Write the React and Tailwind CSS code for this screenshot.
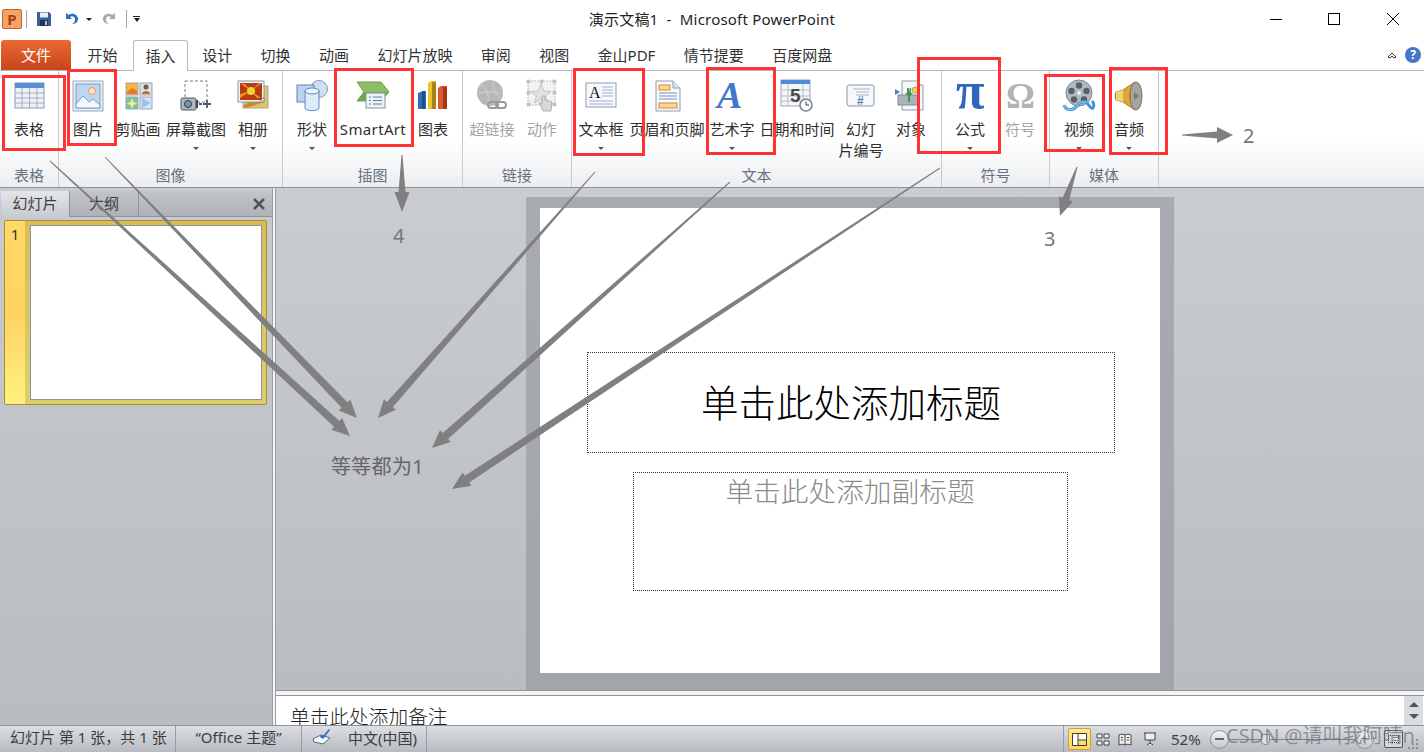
import React from "react";

// tapered annotation arrow: thin tail, thick neck, flat head
function arrowPoints(x1, y1, x2, y2, tail, neck, head, headLen) {
  const len = Math.hypot(x2 - x1, y2 - y1);
  const ux = (x2 - x1) / len;
  const uy = (y2 - y1) / len;
  const nx = -uy;
  const ny = ux;
  const bx = x2 - ux * headLen;
  const by = y2 - uy * headLen;
  const pts = [
    [x1 + (nx * tail) / 2, y1 + (ny * tail) / 2],
    [bx + (nx * neck) / 2, by + (ny * neck) / 2],
    [bx + (nx * head) / 2, by + (ny * head) / 2],
    [x2, y2],
    [bx - (nx * head) / 2, by - (ny * head) / 2],
    [bx - (nx * neck) / 2, by - (ny * neck) / 2],
    [x1 - (nx * tail) / 2, y1 - (ny * tail) / 2],
  ];
  return pts.map((p) => p[0].toFixed(1) + "," + p[1].toFixed(1)).join(" ");
}

const arrows = [
  [50, 161, 350, 436, 1, 8, 16, 18],
  [105, 157, 357, 418, 1, 8, 16, 18],
  [595, 172, 378, 418, 1, 8, 16, 18],
  [730, 182, 432, 448, 1, 8, 16, 18],
  [940, 168, 452, 489, 1, 8, 16, 18],
  [402, 155, 402, 212, 1, 7, 15, 20],
  [1182, 135, 1233, 135, 1, 7, 16, 16],
  [1077, 167, 1060, 216, 1, 7, 15, 18],
];

function Icon({ children }) {
  return (
    <svg width="36" height="36" viewBox="0 0 36 36" className="block overflow-visible">
      {children}
    </svg>
  );
}

const TableIcon = () => (
  <Icon>
    <rect x="4" y="5" width="29" height="25" fill="#eef1f7" stroke="#8c99ad" />
    <rect x="4" y="5" width="29" height="5" fill="#5b8fd6" />
    <path d="M4 15h29M4 20h29M4 25h29M11 10v20M18.500 10v20M26 10v20" stroke="#a3aec0" strokeWidth="1" fill="none" />
  </Icon>
);

const PictureIcon = () => (
  <Icon>
    <rect x="3" y="3" width="30" height="30" fill="#e9eef5" stroke="#9aa7b8" />
    <rect x="6" y="6" width="24" height="24" fill="#bcd7f3" stroke="#7d9cc6" />
    <circle cx="22" cy="13" r="3.500" fill="#fbe3c4" stroke="#f09a58" />
    <path d="M6 26l7-8 6 6 4-3 7 6v3H6z" fill="#f4f8fd" stroke="#7ca2d2" />
  </Icon>
);

const ClipArtIcon = () => (
  <Icon>
    <rect x="6" y="5" width="12" height="12" fill="#f5b63c" stroke="#98a5b5" />
    <path d="M7 14l5-4 5 3v3H7z" fill="#e8762c" />
    <rect x="20" y="5" width="12" height="12" fill="#dfe3e8" stroke="#98a5b5" />
    <circle cx="26" cy="9" r="2.500" fill="#6d5a50" />
    <path d="M22 16c0-4 8-4 8 0z" fill="#c9682c" />
    <rect x="6" y="19" width="12" height="12" fill="#7dc5a0" stroke="#98a5b5" />
    <path d="M12 20l1.500 4 4 1.500-4 1.500-1.500 4-1.500-4-4-1.500 4-1.500z" fill="#f2ee8a" />
    <rect x="20" y="19" width="12" height="12" fill="#d7e6f7" stroke="#98a5b5" />
    <path d="M22 20l9 5-9 5z" fill="#9dc1ea" />
  </Icon>
);

const ScreenshotIcon = () => (
  <Icon>
    <rect x="7" y="3" width="22" height="21" fill="none" stroke="#6f7a88" strokeDasharray="3 2" />
    <rect x="3" y="20" width="15" height="12" rx="1.500" fill="#aeb6c0" stroke="#4f5965" />
    <circle cx="10" cy="26" r="3.500" fill="#7c93ad" stroke="#333c48" />
    <rect x="18" y="22" width="2" height="8" fill="#39424d" />
    <path d="M21 26h3M29 22v8M25 26h8" stroke="#4f5965" strokeWidth="1.800" />
  </Icon>
);

const AlbumIcon = () => (
  <Icon>
    <rect x="8" y="8" width="25" height="22" fill="#e9c15c" stroke="#98a5b5" />
    <path d="M10 30l-2-2 6-4 16 0z" fill="#c98a22" />
    <rect x="3" y="3" width="26" height="21" fill="#f4f5f7" stroke="#8a96a6" />
    <rect x="5" y="5" width="22" height="17" fill="#b63d12" />
    <path d="M16 13L6 6h4zM16 13l8-8h3zM16 13L5 20v-4zM16 13l10 7h-4z" fill="#e9902b" />
    <circle cx="16" cy="13" r="4" fill="#e8d72a" />
    <path d="M24 24l5-5v5z" fill="#d9dee4" stroke="#8a96a6" />
  </Icon>
);

const ShapesIcon = () => (
  <Icon>
    <circle cx="25" cy="11" r="8.500" fill="#cfe0f4" stroke="#7c9cc4" />
    <rect x="3" y="7" width="17" height="17" fill="#bcd3ef" stroke="#5f86b8" />
    <path d="M11 13v17c0 3.500 14 3.500 14 0V13z" fill="#dcebfa" stroke="#5f86b8" />
    <ellipse cx="18" cy="13" rx="7" ry="3" fill="#f0f7fe" stroke="#5f86b8" />
  </Icon>
);

const SmartArtIcon = () => (
  <Icon>
    <path d="M2 4h24l8 10-8 9H2l7-9z" fill="#8cbf63" stroke="#6b9c47" />
    <path d="M9 14h25l-8 9H2z" fill="#6fa846" />
    <rect x="11" y="15" width="19" height="15" fill="#eef2f7" stroke="#8896a8" />
    <path d="M14 19h2M18 19h9M14 22.500h2M18 22.500h9M14 26h2M18 26h9" stroke="#5d7fa8" />
  </Icon>
);

const ChartIcon = () => (
  <Icon>
    <path d="M3 15l5-2h3v18H3z" fill="#2f6fb5" />
    <rect x="7" y="13" width="3" height="18" fill="#1f4f8a" />
    <path d="M13 5l3-2h5l-1 28h-7z" fill="#ecc52f" />
    <rect x="17" y="4" width="4" height="27" fill="#a9831a" />
    <path d="M23 10l3-2h6l-1 23h-8z" fill="#e2562a" />
    <rect x="28" y="9" width="4" height="22" fill="#a33a16" />
  </Icon>
);

const LinkIcon = () => (
  <Icon>
    <circle cx="16" cy="15" r="13" fill="#b8b8b8" />
    <path d="M7 7c6 3 8 8 7 19M4 16c8-3 16-3 24 0M20 3c-2 6 0 12 6 17" stroke="#d0d0d0" fill="none" />
    <rect x="14" y="24" width="10" height="6" rx="3" fill="none" stroke="#9a9a9a" strokeWidth="2" />
    <rect x="22" y="24" width="10" height="6" rx="3" fill="none" stroke="#9a9a9a" strokeWidth="2" />
  </Icon>
);

const ActionIcon = () => (
  <Icon>
    <rect x="4" y="3" width="27" height="24" fill="#f3f1f1" stroke="#bdbdbd" strokeDasharray="2 1" />
    <path d="M17 6l3 7 7 .500-5.500 4.500 2 7-6.500-4-6.500 4 2-7L7 13.500l7-.500z" fill="#e4e0e0" stroke="#c5c2c2" />
    <path d="M18 18v8l-3-2 4 9h8l1-9-7-2v-4z" fill="#dbd7d6" stroke="#b3b0b0" />
    <path d="M3 2h3v3H3zM16 2h3v3h-3zM29 2h3v3h-3zM3 13h3v3H3zM29 13h3v3h-3zM3 25h3v3H3zM29 25h3v3h-3z" fill="#c9c9c9" stroke="#a8a8a8" strokeWidth=".5" />
  </Icon>
);

const TextBoxIcon = () => (
  <Icon>
    <rect x="3" y="5" width="30" height="24" fill="#f7f9fc" stroke="#8e9bae" />
    <text x="6" y="20" fontSize="16" fontFamily="'Liberation Serif', serif" fill="#111">A</text>
    <path d="M19 9h11M19 12h11M19 15h11M19 18h11M6 23h24M6 26h24" stroke="#9cb1d1" />
  </Icon>
);

const HeaderIcon = () => (
  <Icon>
    <path d="M7 3h17l7 7v23H7z" fill="#f7f9fc" stroke="#8e9bae" />
    <path d="M24 3v7h7" fill="#dfe5ee" stroke="#8e9bae" />
    <rect x="10" y="7" width="11" height="5" fill="#f8d79a" stroke="#e0892a" />
    <path d="M10 15h18M10 18h18M10 21h18" stroke="#6f8fc4" />
    <rect x="10" y="25" width="18" height="5" fill="#f8d79a" stroke="#e0892a" />
  </Icon>
);

const WordArtIcon = () => (
  <Icon>
    <text x="3" y="30" fontSize="38" fontStyle="italic" fontFamily="'Liberation Serif', serif" fontWeight="700" fill="#4178cc">A</text>
  </Icon>
);

const DateIcon = () => (
  <Icon>
    <rect x="2" y="2" width="29" height="26" fill="#f5f6f8" stroke="#9aa5b4" />
    <rect x="2" y="2" width="29" height="4" fill="#4f8ad8" />
    <path d="M2 12h29M2 18h29M2 23h29M9 6v22M24 6v22" stroke="#b5bcc7" />
    <text x="11" y="24" fontSize="19" fontWeight="700" fontFamily="'Liberation Sans', sans-serif" fill="#4a4a4a">5</text>
    <circle cx="27" cy="27" r="6" fill="#fbfbfb" stroke="#73808f" strokeWidth="1.500" />
    <path d="M27 23.500V27h3" stroke="#444" fill="none" />
  </Icon>
);

const NumberIcon = () => (
  <Icon>
    <rect x="4" y="7" width="27" height="21" rx="2" fill="#f5f8fc" stroke="#8797ad" />
    <path d="M10 11h17M13 14h13M13 17h13" stroke="#a9b4c6" />
    <text x="14" y="27" fontSize="12" fontWeight="700" fontFamily="'Liberation Sans', sans-serif" fill="#5c7eb0">#</text>
  </Icon>
);

const ObjectIcon = () => (
  <Icon>
    <path d="M9 3h16v4l5 0v25H9z" fill="#f5f7fa" stroke="#8e9bae" />
    <rect x="5" y="17" width="21" height="10" fill="#a8b3be" stroke="#7f8b98" />
    <path d="M2 11l5 3-5 3z" fill="#3f80d8" />
    <circle cx="22" cy="12" r="3" fill="#e9cf6b" stroke="#c8a63a" />
    <path d="M14 10v5h-2l3 3v6h2v-6l3-3h-2v-5h-1l-.500 4-.500-4z" fill="#3f9a4c" />
  </Icon>
);

const SerifGlyphIcon = ({ glyph, color, size, x, y, weight }) => (
  <Icon>
    <text x={x} y={y} fontSize={size} fontWeight={weight} fontFamily="'Liberation Serif', serif" fill={color}>
      {glyph}
    </text>
  </Icon>
);

const VideoIcon = () => (
  <Icon>
    <circle cx="18" cy="15" r="13" fill="#b2b8bf" stroke="#7f8891" />
    <circle cx="18" cy="15" r="2" fill="#eef0f2" />
    <circle cx="18" cy="7.500" r="3.200" fill="#56616f" />
    <circle cx="25.500" cy="13" r="3.200" fill="#56616f" />
    <circle cx="10.500" cy="13" r="3.200" fill="#56616f" />
    <circle cx="13" cy="21.500" r="3.200" fill="#56616f" />
    <circle cx="23" cy="21.500" r="3.200" fill="#56616f" />
    <path d="M3 27c2 6 9 6 13 1s8-5 10-3 3 6 6 5c1-2 1-5-1-7" fill="none" stroke="#3f95d8" strokeWidth="3" />
    <path d="M3 27c2 6 9 6 13 1s8-5 10-3" fill="none" stroke="#a7d4f3" />
  </Icon>
);

const SpeakerIcon = () => (
  <Icon>
    <path d="M5 14l7-2L24 4v28l-12-8-7-2c-1-3-1-5 0-8z" fill="#dca735" stroke="#a9802a" />
    <path d="M5 14l7-2v12l-7-2z" fill="#f3d27a" />
    <ellipse cx="25" cy="18" rx="6" ry="14" fill="#a5a49d" stroke="#6f6e67" />
    <path d="M23 14l5 4-5 4z" fill="#7d7b72" />
  </Icon>
);

function RibbonButton({ width, label, second, caret, dim, children }) {
  return (
    <div className={`flex flex-col items-center pt-[7px] ${width}`}>
      <div className="h-9 w-9">{children}</div>
      <div className={`mt-1 h-[22px] whitespace-nowrap text-[15px] leading-[22px] ${dim ? "text-[#a3a5a8]" : "text-[#2f2f2f]"}`}>{label}</div>
      {second && <div className="h-[20px] whitespace-nowrap text-[15px] leading-[20px] text-[#2f2f2f]">{second}</div>}
      {caret && <div className="mt-[7px] h-0 w-0 border-x-[3px] border-t-[3px] border-x-transparent border-t-[#555]" />}
    </div>
  );
}

function RibbonGroup({ width, label, children }) {
  return (
    <div className={`flex h-full flex-col border-r border-[#c7cacf] ${width}`}>
      <div className="flex h-[93px]">{children}</div>
      <div className="text-center text-[15px] leading-[22px] text-[#66727f]">{label}</div>
    </div>
  );
}

const tabs = ["设计", "切换", "动画", "幻灯片放映", "审阅", "视图", "金山PDF", "情节提要", "百度网盘"];

function TitleBar() {
  return (
    <div className="grid h-[38px] grid-cols-[1fr_auto_1fr] items-center bg-white">
      <div className="flex items-center">
        <div className="ml-[2px] flex h-5 w-5 items-center justify-center rounded-[2px] border border-[#c9622a] bg-[#f6a36a] text-[15px] font-bold leading-none text-[#a83d0c]">P</div>
        <div className="ml-[4px] h-[18px] w-px bg-[#a6a6a6]" />
        <svg width="16" height="16" viewBox="0 0 16 16" className="ml-[9px]">
          <path d="M1 1h12l2 2v12H1z" fill="#3b5f94" />
          <rect x="4" y="1.500" width="8" height="5" fill="#e8eef6" />
          <rect x="4" y="9" width="8" height="6" fill="#20355a" />
          <rect x="9" y="10" width="2" height="4" fill="#b9c6da" />
        </svg>
        <svg width="16" height="16" viewBox="0 0 16 16" className="ml-[11px]">
          <path d="M3 2v6h6L7 6c2-1.500 5-.500 5 2.500 0 2-1 3.500-3 4.500 4 0 6-2.500 6-5C15 3.500 9.500 1 5.500 4z" fill="#2b6cc4" />
        </svg>
        <div className="ml-[7px] h-0 w-0 border-x-[3px] border-t-[3px] border-x-transparent border-t-[#222]" />
        <svg width="16" height="16" viewBox="0 0 16 16" className="ml-[10px]">
          <path d="M13 2v6H7l2-2C7 4.500 4 5.500 4 8.500c0 2 1 3.500 3 4.500-4 0-6-2.500-6-5C1 3.500 6.500 1 10.500 4z" fill="#a9a9a9" />
        </svg>
        <div className="ml-[8px] h-[18px] w-px bg-[#a6a6a6]" />
        <div className="ml-[6px] flex flex-col items-center">
          <div className="mb-px h-px w-[7px] bg-[#222]" />
          <div className="h-0 w-0 border-x-[3.5px] border-t-[4px] border-x-transparent border-t-[#222]" />
        </div>
      </div>
      <div className="whitespace-pre text-[15px] leading-5 tracking-[0.2px] text-[#1e1e1e]">演示文稿1  -  Microsoft PowerPoint</div>
      <div className="flex items-center justify-end pr-[25px]">
        <div className="h-px w-[12px] bg-black" />
        <div className="ml-[46px] h-[12px] w-[12px] border border-black" />
        <svg width="12" height="12" viewBox="0 0 12 12" className="ml-[47px]">
          <path d="M0 0l12 12M12 0L0 12" stroke="#000" />
        </svg>
      </div>
    </div>
  );
}

function TabRow() {
  return (
    <div className="flex h-[33px] items-end border-b border-[#b5b8bd] bg-white">
      <div className="ml-px flex h-[30px] w-[70px] items-center justify-center rounded-t-[3px] bg-gradient-to-b from-[#ea6a33] to-[#c8431a] text-[15px] text-white">文件</div>
      <div className="ml-[2px] px-[14.500px] text-[15px] leading-[30px] text-[#333]">开始</div>
      <div className="-mb-px ml-px h-[31px] rounded-t-[3px] border border-b-0 border-[#b5b8bd] bg-white px-[11.500px] text-[15px] leading-[30px] text-[#333]">插入</div>
      {tabs.map((t) => (
        <div key={t} className="px-[14.200px] text-[15px] leading-[30px] text-[#333]">{t}</div>
      ))}
      <div className="ml-auto flex h-[30px] items-center pr-[3px]">
        <svg width="10" height="8" viewBox="0 0 10 8" className="mr-[8px]">
          <path d="M1 6l4-4 4 4-2 1-2-2-2 2z" fill="none" stroke="#333" />
        </svg>
        <div className="flex h-[16px] w-[16px] items-center justify-center rounded-full bg-[#4577c8] text-xs font-bold leading-none text-white">?</div>
      </div>
    </div>
  );
}

function Ribbon() {
  return (
    <div className="flex h-[117px] border-b border-[#8e9299] bg-gradient-to-b from-white from-[60%] to-[#eceef0]">
      <RibbonGroup width="w-[59px]" label="表格">
        <RibbonButton width="w-[59px]" label="表格"><TableIcon /></RibbonButton>
      </RibbonGroup>
      <RibbonGroup width="w-[224px]" label="图像">
        <RibbonButton width="w-[58px]" label="图片"><PictureIcon /></RibbonButton>
        <RibbonButton width="w-[42px]" label="剪贴画"><ClipArtIcon /></RibbonButton>
        <RibbonButton width="w-[74px]" label="屏幕截图" caret><ScreenshotIcon /></RibbonButton>
        <RibbonButton width="w-[40px]" label="相册" caret><AlbumIcon /></RibbonButton>
      </RibbonGroup>
      <RibbonGroup width="w-[180px]" label="插图">
        <RibbonButton width="w-[58px]" label="形状" caret><ShapesIcon /></RibbonButton>
        <RibbonButton width="w-[64px]" label={<span className="tracking-[0.35px]">SmartArt</span>}><SmartArtIcon /></RibbonButton>
        <RibbonButton width="w-[56px]" label="图表"><ChartIcon /></RibbonButton>
      </RibbonGroup>
      <RibbonGroup width="w-[109px]" label="链接">
        <RibbonButton width="w-[58px]" label="超链接" dim><LinkIcon /></RibbonButton>
        <RibbonButton width="w-[42px]" label="动作" dim><ActionIcon /></RibbonButton>
      </RibbonGroup>
      <RibbonGroup width="w-[370px]" label="文本">
        <RibbonButton width="w-[58px]" label="文本框" caret><TextBoxIcon /></RibbonButton>
        <RibbonButton width="w-[74px]" label="页眉和页脚"><HeaderIcon /></RibbonButton>
        <RibbonButton width="w-[56px]" label="艺术字" caret><WordArtIcon /></RibbonButton>
        <RibbonButton width="w-[74px]" label="日期和时间"><DateIcon /></RibbonButton>
        <RibbonButton width="w-[54px]" label="幻灯" second="片编号"><NumberIcon /></RibbonButton>
        <RibbonButton width="w-[46px]" label="对象"><ObjectIcon /></RibbonButton>
      </RibbonGroup>
      <RibbonGroup width="w-[108px]" label="符号">
        <RibbonButton width="w-[56px]" label="公式" caret>
          <SerifGlyphIcon glyph="π" color="#2f67c0" size="52" x="4" y="30" weight="700" />
        </RibbonButton>
        <RibbonButton width="w-[44px]" label="符号" dim>
          <SerifGlyphIcon glyph="Ω" color="#b3b3b3" size="36" x="4" y="30" weight="700" />
        </RibbonButton>
      </RibbonGroup>
      <RibbonGroup width="w-[109px]" label="媒体">
        <RibbonButton width="w-[58px]" label="视频" caret><VideoIcon /></RibbonButton>
        <RibbonButton width="w-[42px]" label="音频" caret><SpeakerIcon /></RibbonButton>
      </RibbonGroup>
    </div>
  );
}

function SlidesPanel() {
  return (
    <div className="flex w-[272px] flex-col bg-gradient-to-b from-[#c7cacf] to-[#b9bcc1] pl-px">
      <div className="mt-[3px] flex h-[26px] items-stretch border-b border-[#8f949b] bg-gradient-to-b from-[#c2c5ca] to-[#aeb2b7]">
        <div className="-mb-px w-[69px] border-r border-[#8f949b] bg-gradient-to-b from-[#e4e6ea] to-[#c7cacf] text-center text-[15px] leading-[25px] text-[#3e3e3e]">幻灯片</div>
        <div className="w-[69px] border-r border-[#8f949b] text-center text-[15px] leading-[25px] text-[#3e3e3e]">大纲</div>
        <svg width="12" height="12" viewBox="0 0 12 12" className="ml-auto mr-[7px] self-center">
          <path d="M1 1l10 10M11 1L1 11" stroke="#4e545c" strokeWidth="2.500" />
        </svg>
      </div>
      <div className="ml-[3px] mt-[3px] flex h-[185px] w-[263px] overflow-hidden rounded-[2px] border border-[#b28a2e] bg-gradient-to-b from-[#d9bb5b] to-[#d8d06e]">
        <div className="w-[20px] bg-gradient-to-b from-[#ffd966] via-[#ffd262] to-[#fff27c] text-center text-[15px] leading-[26px] text-[#333]">1</div>
        <div className="ml-[5px] mt-[4px] h-[175px] w-[232px] border border-[#8f949b] bg-white" />
      </div>
    </div>
  );
}

function SlideArea() {
  return (
    <div className="flex flex-1 justify-center bg-gradient-to-b from-[#c9ccd1] to-[#b9bcc1] pt-[9px]">
      <div className="h-[493px] w-[648px] bg-gradient-to-b from-[#a8abb0] to-[#a2a5aa] px-[14px] pt-[11px]">
        <div className="flex h-[465px] w-[620px] flex-col items-center bg-white pt-[144px]">
          <div className="ml-[2px] flex h-[101px] w-[528px] items-center justify-center border border-dotted border-[#333] text-[37.500px] font-light leading-none text-black">单击此处添加标题</div>
          <div className="mt-[19px] h-[119px] w-[435px] border border-dotted border-[#333] text-center text-[27.700px] font-light leading-[36px] text-[#8b8b8b]">单击此处添加副标题</div>
        </div>
      </div>
    </div>
  );
}

function NotesPane() {
  return (
    <div className="flex h-[35px] flex-col border-t-[1px] border-[#8f949b] bg-[#f3f4f6] pt-[4px]">
      <div className="flex h-[30px] overflow-hidden border-t border-[#8f949b] bg-white">
        <div className="flex-1 pl-[14px] pt-[8px] text-[19.700px] font-light leading-[26px] text-[#222]">单击此处添加备注</div>
        <div className="mr-px flex w-[19px] flex-col items-center justify-around bg-[#d9dce1] py-[2px]">
          <div className="h-0 w-0 border-x-[5px] border-b-[5px] border-x-transparent border-b-[#555]" />
          <div className="h-0 w-0 border-x-[5px] border-t-[5px] border-x-transparent border-t-[#555]" />
        </div>
      </div>
    </div>
  );
}

function StatusBar() {
  return (
    <div className="flex h-[27px] items-stretch border-t border-[#8f949b] bg-gradient-to-b from-[#dcdfe3] to-[#b7bbc1] text-[15px] leading-[23px] text-[#3d3d3d]">
      <div className="w-[176px] whitespace-nowrap border-r border-[#9a9ea4] pl-[10px]">幻灯片 第 1 张，共 1 张</div>
      <div className="w-[126px] whitespace-nowrap border-r border-[#9a9ea4] text-center">“Office 主题”</div>
      <div className="flex w-[125px] items-center border-r border-[#9a9ea4] pb-[2px] pl-[9px]">
        <svg width="22" height="18" viewBox="0 0 22 18">
          <path d="M2 10l8-4 9 3-7 6-9-2z" fill="#f4f6fa" stroke="#52678a" />
          <path d="M9 8l3 2 7-9-1-1-6 7-2-1z" fill="#2f6bc4" />
        </svg>
        <span className="ml-[15px]">中文(中国)</span>
      </div>
      <div className="ml-auto flex w-[361px] items-center border-l border-[#9a9ea4] pl-[4px]">
        <div className="flex h-[22px] w-[23px] items-center justify-center rounded-[2px] border border-[#c8a23c] bg-gradient-to-b from-[#ffe98f] to-[#ffd65c]">
          <svg width="15" height="13" viewBox="0 0 15 13">
            <rect x="1" y="1" width="5" height="11" fill="#fff" />
            <rect x="6.500" y="1" width="7.500" height="6" fill="#fff" />
            <path d="M.5.500h14v12H.5zM6 .500v12M6 7h8.500" fill="none" stroke="#3d3d3d" />
          </svg>
        </div>
        <svg width="14" height="13" viewBox="0 0 14 13" className="ml-[5px]">
          <path d="M1 1h5v4H1zM8 1h5v4H8zM1 8h5v4H1zM8 8h5v4H8z" fill="#f2f2f2" stroke="#444" />
        </svg>
        <svg width="14" height="13" viewBox="0 0 14 13" className="ml-[8px]">
          <path d="M7 2C5 1 3 1 1 2v10c2-1 4-1 6 0 2-1 4-1 6 0V2c-2-1-4-1-6 0zM7 2v10M3 4.500h2M3 7h2M9 4.500h2M9 7h2" fill="#efefef" stroke="#444" />
        </svg>
        <svg width="14" height="14" viewBox="0 0 14 14" className="ml-[11px]">
          <path d="M1 1h12M2 1v7h10V1M7 8v3M4 13l3-2 3 2" fill="#efefef" stroke="#444" />
        </svg>
        <span className="ml-[14px] text-[15px] text-[#3f3f3f]">52%</span>
        <div className="ml-[9px] flex h-[19px] w-[19px] items-center justify-center rounded-full border border-[#8f949b] bg-gradient-to-b from-[#f3f4f6] to-[#c4c7cc]">
          <div className="h-[2px] w-[9px] bg-[#666]" />
        </div>
        <div className="relative h-px w-[126px] bg-[#7d8289]">
          <div className="absolute left-[32px] top-[-5px] h-[11px] w-[9px] rounded-b-[4px] border border-[#888] bg-[#dfe1e4]" />
        </div>
        <div className="flex h-[19px] w-[19px] items-center justify-center rounded-full border border-[#8f949b] bg-gradient-to-b from-[#f3f4f6] to-[#c4c7cc] text-xs leading-none text-[#666]">+</div>
        <div className="ml-[10px] flex h-[18px] w-[19px] items-center justify-center rounded-[2px] border border-[#555] bg-[#d6d8dc]">
          <div className="h-[8px] w-[11px] border border-dotted border-[#333]" />
        </div>
        <svg width="12" height="12" viewBox="0 0 12 12" className="ml-[4px] mt-[10px]">
          <path d="M9 1h2v2H9zM5 5h2v2H5zM9 5h2v2H9zM1 9h2v2H1zM5 9h2v2H5zM9 9h2v2H9z" fill="#8b9097" />
        </svg>
      </div>
    </div>
  );
}

// red call-out frames, arrows and hand-written numbers that sit above the window
function Markup() {
  const frame = "absolute border-[3px] border-[#ff3333]";
  return (
    <div className="pointer-events-none absolute inset-0">
      <div className={`${frame} left-[2px] top-[75px] h-[76px] w-[64px]`} />
      <div className={`${frame} left-[67px] top-[69px] h-[77px] w-[50px]`} />
      <div className={`${frame} left-[334px] top-[68px] h-[79px] w-[80px]`} />
      <div className={`${frame} left-[573px] top-[68px] h-[88px] w-[72px]`} />
      <div className={`${frame} left-[706px] top-[67px] h-[88px] w-[70px]`} />
      <div className={`${frame} left-[917px] top-[57px] h-[97px] w-[84px]`} />
      <div className={`${frame} left-[1044px] top-[74px] h-[78px] w-[61px]`} />
      <div className={`${frame} left-[1109px] top-[67px] h-[88px] w-[59px]`} />
      <svg width="1424" height="752" className="absolute left-0 top-0">
        {arrows.map((a, i) => (
          <polygon key={i} points={arrowPoints(...a)} fill="#808080" />
        ))}
      </svg>
      <div className="absolute left-[1243px] top-[122px] text-xl leading-7 text-[#777]">2</div>
      <div className="absolute left-[1044px] top-[225px] text-xl leading-7 text-[#777]">3</div>
      <div className="absolute left-[393px] top-[222px] text-xl leading-7 text-[#777]">4</div>
      <div className="absolute left-[331px] top-[453px] text-xl leading-7 tracking-[0.3px] text-[#666]">等等都为1</div>
      <div className="absolute left-[1226px] top-[722px] whitespace-nowrap text-[20px] leading-7 text-[#6e7278]/70">CSDN @请叫我阿晴n</div>
    </div>
  );
}

export default function App() {
  return (
    <div className="relative flex h-screen w-screen flex-col overflow-hidden bg-white font-['Noto_Sans','Noto_Sans_CJK_SC',sans-serif]">
      <TitleBar />
      <TabRow />
      <Ribbon />
      <div className="flex min-h-0 flex-1">
        <SlidesPanel />
        <div className="w-[4px] border-x border-[#9a9ea4] bg-[#f4f5f7]" />
        <div className="flex min-w-0 flex-1 flex-col">
          <SlideArea />
          <NotesPane />
        </div>
      </div>
      <StatusBar />
      <Markup />
    </div>
  );
}
